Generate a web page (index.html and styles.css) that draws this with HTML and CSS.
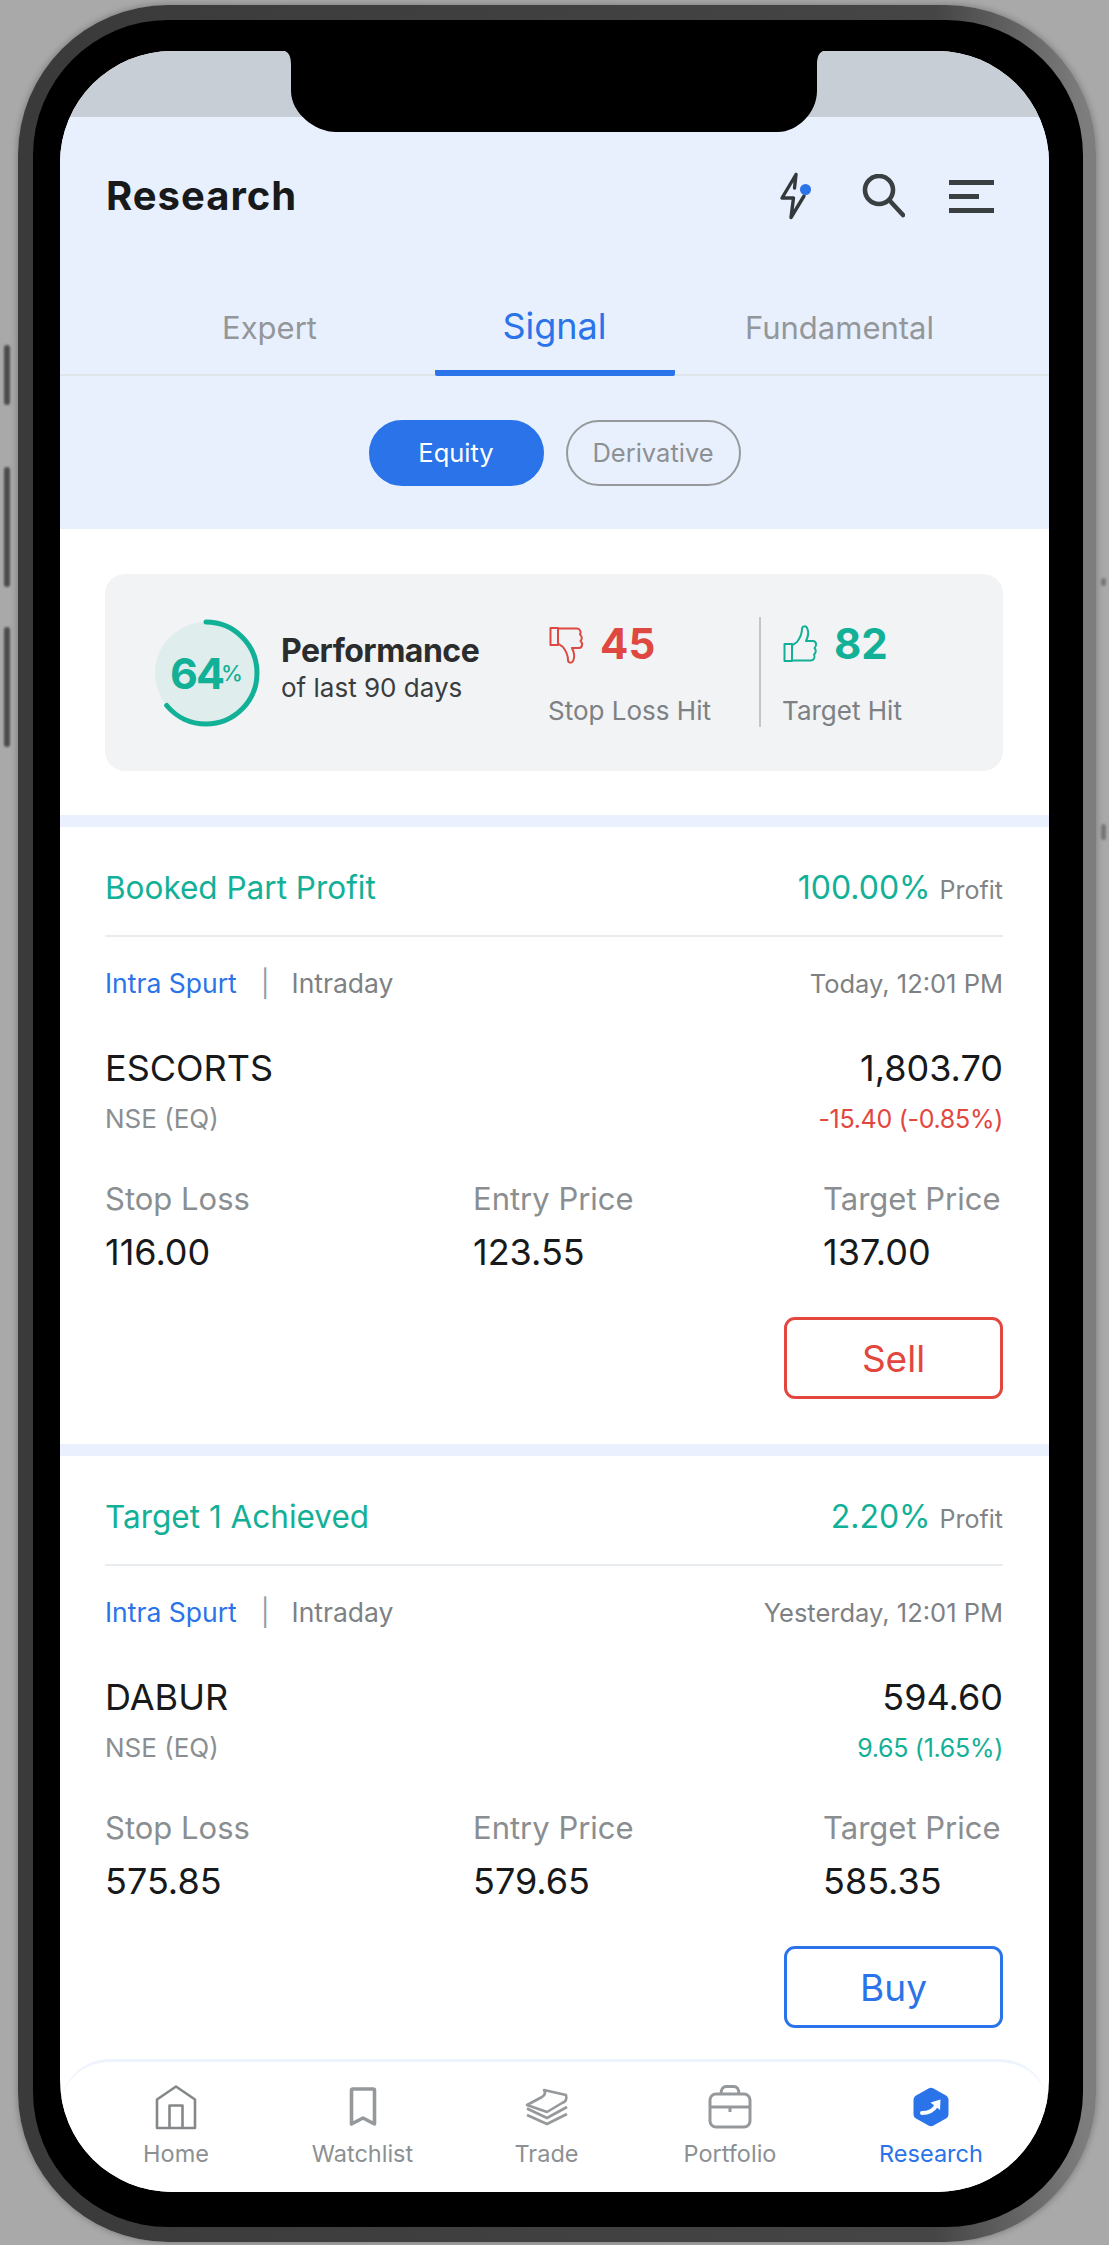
FILE: index.html
```html
<!DOCTYPE html>
<html lang="en">
<head>
  <meta charset="UTF-8">
  <title>Research</title>
  <link rel="stylesheet" href="styles.css">
</head>
<body>

<span class="side-btn side-mute"></span>
<span class="side-btn side-up"></span>
<span class="side-btn side-down"></span>
<span class="side-btn side-mark-a"></span>
<span class="side-btn side-mark-b"></span>

<div class="phone">
  <div class="screen">
    <svg class="notch" width="538" height="81" viewBox="0 0 538 81"><path d="M0 0H538C533 2 532 8 532 14V40C532 62 512 81 493 81H51C30 81 6 62 6 40V14C6 8 5 2 0 0Z" fill="#000"/></svg>

    <div class="status"></div>

    <header class="head">
      <div class="topbar">
        <h1>Research</h1>
        <div class="top-icons">
          <svg class="bolt" width="33" height="48" viewBox="0 0 33 48"><path d="M17 2.500L3 26H14.500L12 45.500L25 24M17 2.500L15.500 16" fill="none" stroke="#33383b" stroke-width="3.400" stroke-linecap="round" stroke-linejoin="round"/><circle cx="26.500" cy="17.500" r="5.500" fill="#2a73e8"/></svg>
          <svg width="44" height="44" viewBox="0 0 44 44"><circle cx="18" cy="16" r="14" fill="none" stroke="#3a3f42" stroke-width="4.600"/><path d="M29 27L42 41" stroke="#3a3f42" stroke-width="4.600" stroke-linecap="round"/></svg>
          <div class="burger"><i></i><i class="short"></i><i></i></div>
        </div>
      </div>
      <nav class="tabs">
        <a class="tab">Expert</a>
        <a class="tab active">Signal</a>
        <a class="tab">Fundamental</a>
      </nav>
      <div class="pills">
        <span class="pill on">Equity</span>
        <span class="pill">Derivative</span>
      </div>
    </header>

    <div class="list">
      <section class="perf-wrap">
        <div class="perf">
          <svg class="ring" width="112" height="112" viewBox="0 0 112 112">
            <circle cx="56" cy="56" r="51" fill="#dfeeed"/>
            <circle cx="56" cy="56" r="51" fill="none" stroke="#12b097" stroke-width="5" stroke-linecap="round" pathLength="100" stroke-dasharray="64 100" transform="rotate(-90 56 56)"/>
            <text x="20" y="72" class="ring-num">64</text>
            <text x="71" y="64" class="ring-pct">%</text>
          </svg>
          <div class="perf-text">
            <b>Performance</b>
            <span>of last 90 days</span>
          </div>
          <div class="stat">
            <div class="stat-top red">
              <svg width="36" height="39" viewBox="0 0 34 39"><g transform="matrix(1 0 0 -1 0 39)"><path d="M1.500 19H9V36H1.500ZM9 20.500L14 17C17 13 19 9 19 4C19 1 23 0 24.500 4C26 8 25 12 23 16H30C33.500 16 34 21 31.500 23C33.500 25 33 28 31 29.500C32.500 32 31 35.500 28 35.500H9" fill="none" stroke="#de4840" stroke-width="2" stroke-linejoin="round"/></g></svg>
              <strong>45</strong>
            </div>
            <span>Stop Loss Hit</span>
          </div>
          <div class="stat-line"></div>
          <div class="stat stat-target">
            <div class="stat-top green">
              <svg width="36" height="39" viewBox="0 0 34 39"><path d="M1.500 19H9V36H1.500ZM9 20.500L14 17C17 13 19 9 19 4C19 1 23 0 24.500 4C26 8 25 12 23 16H30C33.500 16 34 21 31.500 23C33.500 25 33 28 31 29.500C32.500 32 31 35.500 28 35.500H9" fill="none" stroke="#12b097" stroke-width="2" stroke-linejoin="round"/></svg>
              <strong>82</strong>
            </div>
            <span>Target Hit</span>
          </div>
        </div>
      </section>

      <div class="band"></div>

      <section class="card">
        <div class="card-head">
          <span class="state">Booked Part Profit</span>
          <span class="profit"><b>100.00%</b> Profit</span>
        </div>
        <div class="meta">
          <span class="meta-l"><a>Intra Spurt</a><i>|</i>Intraday</span>
          <span class="meta-r">Today, 12:01 PM</span>
        </div>
        <div class="quote">
          <span class="name">ESCORTS</span>
          <span class="name">1,803.70</span>
          <span class="sub">NSE (EQ)</span>
          <span class="sub down">-15.40 (-0.85%)</span>
        </div>
        <div class="prices">
          <div><label>Stop Loss</label><span>116.00</span></div>
          <div><label>Entry Price</label><span>123.55</span></div>
          <div><label>Target Price</label><span>137.00</span></div>
        </div>
        <div class="actions"><button class="btn sell">Sell</button></div>
      </section>

      <div class="band"></div>

      <section class="card">
        <div class="card-head">
          <span class="state">Target 1 Achieved</span>
          <span class="profit"><b>2.20%</b> Profit</span>
        </div>
        <div class="meta">
          <span class="meta-l"><a>Intra Spurt</a><i>|</i>Intraday</span>
          <span class="meta-r">Yesterday, 12:01 PM</span>
        </div>
        <div class="quote">
          <span class="name">DABUR</span>
          <span class="name">594.60</span>
          <span class="sub">NSE (EQ)</span>
          <span class="sub up">9.65 (1.65%)</span>
        </div>
        <div class="prices">
          <div><label>Stop Loss</label><span>575.85</span></div>
          <div><label>Entry Price</label><span>579.65</span></div>
          <div><label>Target Price</label><span>585.35</span></div>
        </div>
        <div class="actions"><button class="btn buy">Buy</button></div>
      </section>
    </div>

    <nav class="tabbar">
      <a>
        <svg width="42" height="45" viewBox="0 0 42 45"><path d="M2 43.500V15L21 2L40 15V43.500ZM14.500 43.500V21H27.500V43.500" fill="none" stroke="#85888a" stroke-width="2.600" stroke-linejoin="round"/></svg>
        Home
      </a>
      <a>
        <svg width="28" height="40" viewBox="0 0 28 40"><path d="M2.500 3.500C2.500 2.500 3 2 4 2H24C25 2 25.500 2.500 25.500 3.500V37L14 31L2.500 37Z" fill="none" stroke="#96999b" stroke-width="3.600" stroke-linejoin="round"/></svg>
        Watchlist
      </a>
      <a>
        <svg width="44" height="38" viewBox="0 0 44 38"><path d="M2 17L17 9C20 7 21 5 19 2L41 7C42 11 41 14 37 15L22 24Z" fill="none" stroke="#96999b" stroke-width="2.600" stroke-linejoin="round"/><path d="M2 20.500L22 30L42 19M2 27L22 36L42 26" fill="none" stroke="#96999b" stroke-width="2.800"/></svg>
        Trade
      </a>
      <a>
        <svg width="44" height="44" viewBox="0 0 44 44"><rect x="2" y="9" width="40" height="33" rx="6" fill="none" stroke="#96999b" stroke-width="3"/><path d="M13 9C13 3 16 1.500 18 1.500H26C28 1.500 31 3 31 9M2 22H42" fill="none" stroke="#96999b" stroke-width="3"/><path d="M22 22V27" stroke="#96999b" stroke-width="3"/></svg>
        Portfolio
      </a>
      <a class="current">
        <svg width="36" height="40" viewBox="0 0 36 40"><path d="M15.500 1.500C17 .5 19 .5 20.500 1.500L33 8.500C34.500 9.500 35.500 11 35.500 13V27C35.500 29 34.500 30.500 33 31.500L20.500 38.500C19 39.500 17 39.500 15.500 38.500L3 31.500C1.500 30.500 .5 29 .5 27V13C.5 11 1.500 9.500 3 8.500Z" fill="#2a73e8"/><path d="M9 26C16 26 20 24 23 19" fill="none" stroke="#fff" stroke-width="4" stroke-linecap="round"/><path d="M17.500 15.500L27.500 12.500L27 23Z" fill="#fff"/></svg>
        Research
      </a>
    </nav>
  </div>
</div>

</body>
</html>
```

FILE: styles.css
```css
* {
  box-sizing: border-box;
}
body {
  margin: 0;
  width: 1109px;
  height: 2245px;
  overflow: hidden;
  position: relative;
  background: #a9a9a9;
  font-family: Inter, 'Liberation Sans', sans-serif;
  color: #1a1c1e;
}
.side-btn {
  position: absolute;
  left: 4px;
  width: 6px;
  background: #4b4b4b;
  border-radius: 3px;
  filter: blur(1px);
}
.side-mute { top: 345px; height: 60px; }
.side-up { top: 467px; height: 120px; }
.side-down { top: 627px; height: 120px; }
.side-mark-a { left: 1101px; top: 578px; height: 8px; width: 5px; background: #777; }
.side-mark-b { left: 1101px; top: 824px; height: 16px; width: 5px; background: #777; }

.phone {
  width: 1078px;
  height: 2237px;
  margin: 5px 0 0 18px;
  padding: 31px 34px 35px 27px;
  border: 15px solid transparent;
  border-right-width: 13px;
  border-radius: 150px;
  background:
    linear-gradient(#000, #000) padding-box,
    linear-gradient(90deg, #3a3a3a, #454545 85%, #7d7d7d 99%) border-box;
  box-shadow: 0 0 6px 1px #808080;
}
.screen {
  position: relative;
  width: 989px;
  height: 2141px;
  background: #fff;
  border-radius: 112px;
  overflow: hidden;
  display: flex;
  flex-direction: column;
}
.notch {
  position: absolute;
  top: 0;
  left: 225px;
}
.status {
  height: 66px;
  background: #c8ced6;
}

.head {
  background: #e9f0fd;
  height: 412px;
}
.topbar {
  height: 157px;
  padding: 55px 55px 0 46px;
  display: flex;
  justify-content: space-between;
  align-items: flex-start;
}
h1 {
  margin: 0;
  font-size: 40px;
  line-height: 48px;
  font-weight: 700;
  letter-spacing: 1px;
  color: #17191b;
}
.top-icons {
  display: flex;
  align-items: center;
  gap: 44px;
  height: 48px;
}
.bolt {
  margin-right: 5px;
}
.burger {
  width: 45px;
  display: flex;
  flex-direction: column;
  gap: 9px;
}
.burger i {
  display: block;
  height: 5px;
  background: #3a3f42;
}
.burger i.short {
  width: 30px;
}

.tabs {
  height: 102px;
  padding-left: 67px;
  display: grid;
  grid-template-columns: 285px 285px 285px;
  justify-items: center;
  border-bottom: 2px solid #dfe5e8;
}
.tab {
  width: 240px;
  height: 102px;
  padding-top: 34px;
  text-align: center;
  font-size: 31px;
  line-height: 40px;
  color: #93979a;
}
.tab.active {
  color: #2a73e8;
  font-size: 36px;
  padding-top: 32px;
  border-bottom: 6px solid #2a73e8;
  border-radius: 0 0 2px 2px;
}

.pills {
  display: flex;
  justify-content: center;
  gap: 22px;
  padding-top: 44px;
}
.pill {
  width: 175px;
  height: 66px;
  border-radius: 33px;
  border: 2.500px solid #96999b;
  font-size: 25.500px;
  line-height: 61px;
  text-align: center;
  color: #8c9093;
}
.pill.on {
  background: #2a73e8;
  border-color: #2a73e8;
  color: #fff;
}

.list {
  flex: 1;
  min-height: 0;
  overflow: hidden;
}
.perf-wrap {
  padding: 45px 46px 44px 45px;
  height: 286px;
}
.perf {
  height: 197px;
  border-radius: 20px;
  background: #f1f3f5;
  padding: 43px 0 0 45px;
  display: grid;
  grid-template-columns: 131px 267px 211px 2px auto;
  align-items: start;
}
.ring-num {
  font-size: 43px;
  font-weight: 700;
  fill: #12b097;
  letter-spacing: -2px;
}
.ring-pct {
  font-size: 22px;
  font-weight: 500;
  fill: #12b097;
}
.perf-text {
  display: flex;
  flex-direction: column;
  padding-top: 13px;
}
.perf-text b {
  font-size: 32px;
  line-height: 41px;
  font-weight: 700;
  letter-spacing: -0.500px;
  color: #2a2c2e;
}
.perf-text span {
  font-size: 26px;
  line-height: 34px;
  color: #3a3d40;
}
.stat {
  display: flex;
  flex-direction: column;
}
.stat > span {
  font-size: 26px;
  line-height: 34px;
  color: #7d8184;
  margin-top: 26px;
}
.stat-top {
  display: flex;
  align-items: center;
  gap: 16px;
  height: 48px;
  margin-top: 3px;
}
.stat-top strong {
  font-size: 42px;
  line-height: 48px;
  font-weight: 700;
}
.red { color: #de4840; }
.green { color: #12b097; }
.stat-line {
  width: 2px;
  height: 110px;
  background: #c4c7c9;
}
.stat-target {
  padding-left: 21px;
}

.band {
  height: 12px;
  background: #eaf0fd;
}
.card {
  height: 617px;
  padding: 0 46px 0 45px;
}
.card-head {
  height: 110px;
  padding-top: 12px;
  display: flex;
  justify-content: space-between;
  align-items: center;
  border-bottom: 2px solid #e9ecee;
}
.state {
  font-size: 31.500px;
  color: #12b097;
}
.profit {
  font-size: 25px;
  color: #808487;
}
.profit b {
  font-size: 32px;
  font-weight: 400;
  color: #12b097;
  margin-right: 2px;
}
.meta {
  height: 92px;
  display: flex;
  justify-content: space-between;
  align-items: center;
  font-size: 26.500px;
  color: #7d8184;
}
.meta a {
  color: #2a73e8;
}
.meta i {
  font-style: normal;
  margin: 0 22px 0 24px;
  color: #9a9da0;
}
.meta-r {
  font-size: 25.500px;
}
.quote {
  padding-top: 17px;
  display: grid;
  grid-template-columns: 1fr auto;
  row-gap: 10px;
}
.quote .name {
  font-size: 36px;
  line-height: 44px;
  color: #17191b;
}
.quote span:nth-child(even) {
  text-align: right;
}
.quote .sub {
  font-size: 26px;
  line-height: 38px;
  color: #8a8e91;
}
.quote .down,
.quote .up {
  font-size: 25px;
  letter-spacing: -0.300px;
}
.quote .down { color: #e2463d; }
.quote .up { color: #12b097; }
.prices {
  margin-top: 42px;
  display: grid;
  grid-template-columns: 368px 350px auto;
}
.prices label {
  display: block;
  font-size: 31px;
  line-height: 38px;
  color: #8a8e91;
}
.prices span {
  display: block;
  margin-top: 15px;
  font-size: 36px;
  line-height: 38px;
  color: #17191b;
}
.actions {
  margin-top: 46px;
  display: flex;
  justify-content: flex-end;
}
.btn {
  width: 219px;
  height: 82px;
  background: #fff;
  border-radius: 11px;
  font-family: inherit;
  font-size: 37px;
  border: 3px solid;
}
.sell { color: #e2463d; border-color: #e2463d; }
.buy { color: #2a73e8; border-color: #2a73e8; }

.tabbar {
  height: 133px;
  flex: none;
  padding: 22px 0 0 22px;
  display: grid;
  grid-template-columns: 188px 185px 183px 184px 218px;
  background: #fff;
  border-top: 3px solid #eef4fd;
  border-radius: 50px 50px 0 0;
}
.tabbar a {
  display: flex;
  flex-direction: column;
  align-items: center;
  justify-content: flex-start;
  font-size: 23.500px;
  line-height: 30px;
  color: #8c9093;
}
.tabbar svg {
  height: 46px;
  margin-bottom: 9px;
}
.tabbar .current {
  color: #2a73e8;
}
```
